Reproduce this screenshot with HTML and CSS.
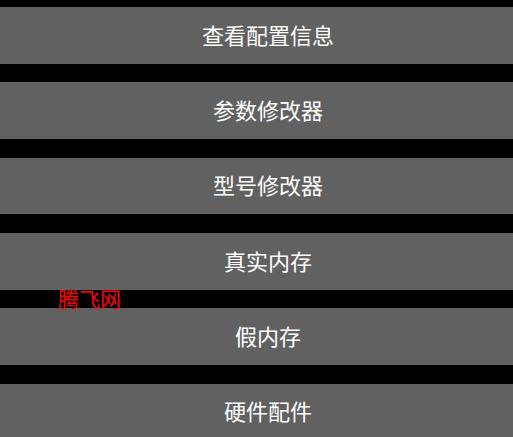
FILE: index.html
```html
<!DOCTYPE html>
<html lang="zh-CN">
<head>
    <meta charset="UTF-8">
    <meta name="viewport" content="width=device-width, initial-scale=1.0">
    <title>工具箱</title>
    <link rel="stylesheet" href="styles.css">
</head>
<body>
<div class="menu">
    <button class="menu-button">查看配置信息</button>
    <button class="menu-button">参数修改器</button>
    <button class="menu-button">型号修改器</button>
    <button class="menu-button">真实内存</button>
    <button class="menu-button">假内存</button>
    <button class="menu-button">硬件配件</button>
</div>
<div class="watermark">腾飞网</div>
</body>
</html>
```

FILE: styles.css
```css
body {
    font-family: "Noto Sans CJK SC", "Noto Sans", sans-serif;
    background-color: #000;
    margin: 0;
    padding: 0;
    height: 437px;
    overflow: hidden;
    position: relative;
}
.menu {
    display: flex;
    flex-direction: column;
    gap: 18.67px;
    padding-top: 7px;
}
.menu-button {
    height: 56.67px;
    flex-shrink: 0;
    background-color: #616161;
    color: #fff;
    border: none;
    margin: 0;
    padding: 0 0 3px 23px;
    font-family: inherit;
    font-size: 22px;
    line-height: 1;
    display: flex;
    justify-content: center;
    align-items: center;
    cursor: pointer;
}
.watermark {
    position: absolute;
    left: 58px;
    top: 286px;
    color: #ff0000;
    font-size: 21px;
    line-height: 1.2;
}
```
